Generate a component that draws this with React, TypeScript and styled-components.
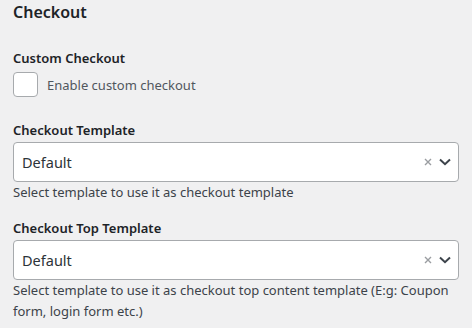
import React from 'react'
import styled, { createGlobalStyle } from 'styled-components'

const GlobalStyle = createGlobalStyle`
  html, body {
    margin: 0;
    padding: 0;
    background: #f0f0f1;
  }
  body {
    font-family: 'Noto Sans', 'Open Sans', sans-serif;
    color: #1d2327;
  }
`

const Page = styled.div`
  padding: 0 13px;
  width: 446px;
`

const Heading = styled.h2`
  margin: 0 0 24px 0;
  font-size: 16px;
  font-weight: 600;
  line-height: 24px;
`

const Field = styled.div`
  display: flex;
  flex-direction: column;
  margin-bottom: 15px;
`

const Label = styled.div`
  font-size: 13px;
  font-weight: 600;
  line-height: 20px;
  margin-bottom: 2px;
`

const CheckRow = styled.label`
  display: flex;
  align-items: center;
  gap: 9px;
  margin: 2px 0 8px 0;
  font-size: 13px;
  color: #50575e;
`

const Box = styled.span`
  width: 23px;
  height: 23px;
  border: 1px solid #a7aaad;
  border-radius: 4px;
  background: #fff;
`

const SelectBox = styled.div`
  display: flex;
  align-items: center;
  height: 38px;
  border: 1px solid #a7aaad;
  border-radius: 4px;
  background: #fff;
  padding: 0 7px 0 8px;
`

const Value = styled.span`
  flex: 1;
  font-size: 14.5px;
  color: #2c3338;
`

const Help = styled.p`
  margin: 0;
  font-size: 13px;
  line-height: 21px;
  color: #3c434a;
`

const Clear = () => (
  <svg width="8" height="8" viewBox="0 0 8 8" style={{ marginRight: 7 }}>
    <path d="M1 1 L7 7 M7 1 L1 7" stroke="#9a9da1" strokeWidth="1.4" />
  </svg>
)

const Chevron = () => (
  <svg width="12" height="8" viewBox="0 0 12 8">
    <path d="M1 1.5 L6 6.2 L11 1.5" fill="none" stroke="#3c434a" strokeWidth="2" />
  </svg>
)

const Select = ({ value }: { value: string }) => (
  <SelectBox>
    <Value>{value}</Value>
    <Clear />
    <Chevron />
  </SelectBox>
)

const App = () => (
  <Page>
    <GlobalStyle />
    <Heading>Checkout</Heading>
    <Field>
      <Label>Custom Checkout</Label>
      <CheckRow>
        <Box />
        Enable custom checkout
      </CheckRow>
    </Field>
    <Field>
      <Label>Checkout Template</Label>
      <Select value="Default" />
      <Help>Select template to use it as checkout template</Help>
    </Field>
    <Field>
      <Label>Checkout Top Template</Label>
      <Select value="Default" />
      <Help>
        Select template to use it as checkout top content template (E:g: Coupon
        form, login form etc.)
      </Help>
    </Field>
  </Page>
)

export default App
